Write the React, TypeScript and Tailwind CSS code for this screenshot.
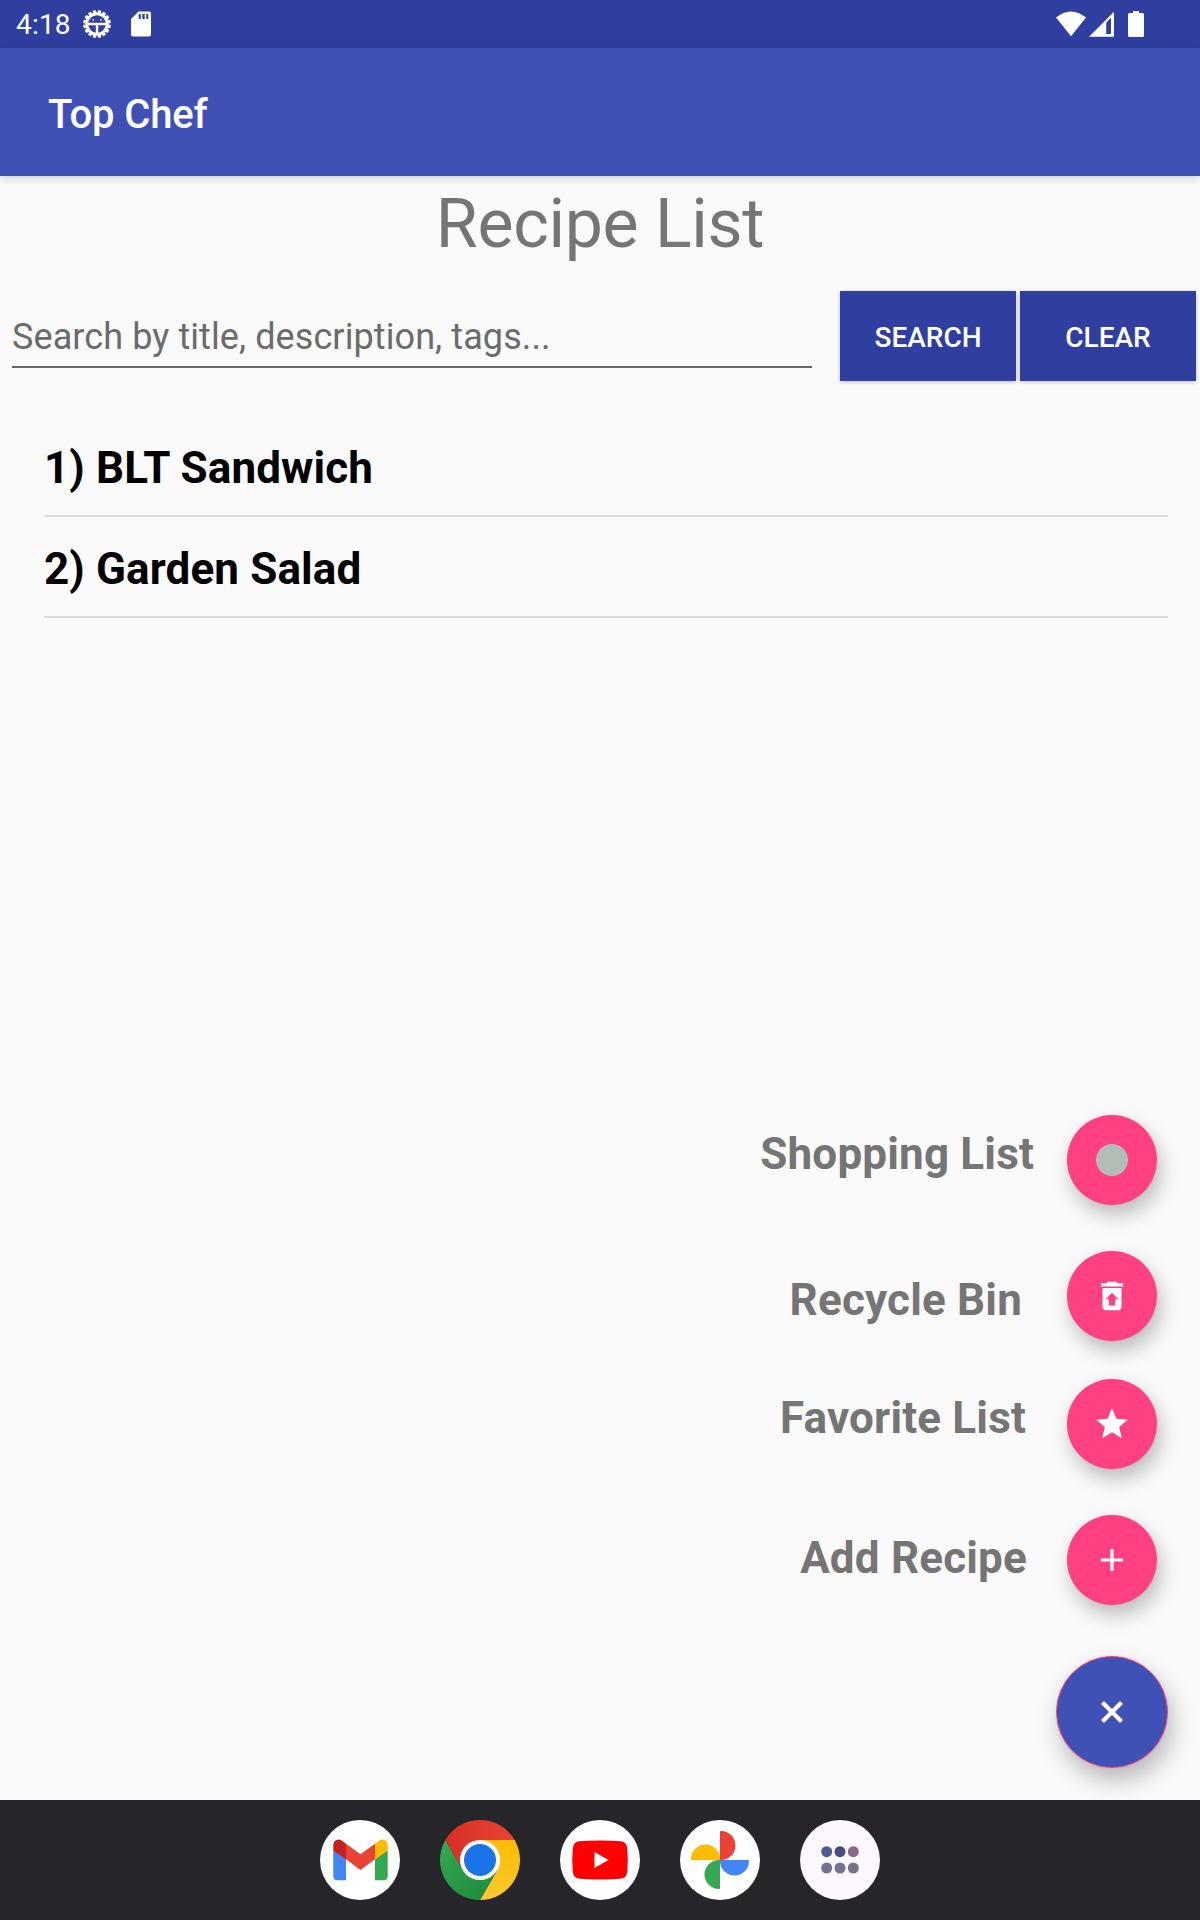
import React from "react";

const recipes = ["1) BLT Sandwich", "2) Garden Salad"];

function GearIcon() {
  const teeth = Array.from({ length: 16 }, (_, i) => i * 22.5 + 11.25);
  return (
    <svg width="28" height="28" viewBox="0 0 28 28" fill="none">
      <g fill="#fff">
        {teeth.map((a) => (
          <rect key={a} x="12.3" y="0.1" width="3.4" height="4" rx="0.9" transform={`rotate(${a} 14 14)`} />
        ))}
        <circle cx="10.2" cy="9.8" r="0.9" />
        <circle cx="17.8" cy="9.8" r="0.9" />
      </g>
      <circle cx="14" cy="14" r="10.2" stroke="#fff" strokeWidth="2.8" />
      <path d="M4 14H24M14 14V25" stroke="#fff" strokeWidth="2.4" />
    </svg>
  );
}

function StatusBar() {
  return (
    <div className="flex h-12 items-center bg-[#303f9f] text-white">
      <span className="ml-4 w-[55px] pt-0.5 text-[28px] leading-[48px] tracking-[0.2px] whitespace-nowrap">4:18</span>
      <span className="ml-3">
        <GearIcon />
      </span>
      <svg className="ml-5" width="20" height="26" viewBox="0 0 20 26">
        <path fill="#fff" fillRule="evenodd" d="M7.500 .5H18Q20 .5 20 2.500V23.500Q20 25.500 18 25.500H2Q0 25.500 0 23.500V8ZM7.700 3V8H9.700V3ZM11.300 3V8H13.700V3ZM15.300 3V8H17.300V3Z" />
      </svg>
      <div className="mr-14 ml-auto flex items-center">
        <svg width="30" height="26" viewBox="0 0 30 26">
          <path fill="#fff" d="M0 6.500Q15-5.500 30 6.500L15 25.200Z" />
        </svg>
        <svg className="ml-[3px]" width="25" height="26" viewBox="0 0 25 26">
          <path fill="#fff" fillRule="evenodd" d="M25 .8V25.800H0ZM22 6.800L17.200 11.800V23H22Z" />
        </svg>
        <svg className="ml-[14px]" width="16" height="26" viewBox="0 0 16 26">
          <path fill="#fff" d="M5 0H11V2H14.500Q16 2 16 3.500V24.500Q16 26 14.500 26H1.500Q0 26 0 24.500V3.500Q0 2 1.500 2H5Z" />
        </svg>
      </div>
    </div>
  );
}

function ActionButton({ label }: { label: string }) {
  return (
    <button className="h-[90px] w-44 bg-[#303f9f] pt-[3px] text-[28px] font-medium text-white shadow-[0_1px_4px_rgba(0,0,0,0.25)]">
      {label}
    </button>
  );
}

type FabRowProps = { label: string; className: string; labelClass: string; children: React.ReactNode };

function FabRow({ label, className, labelClass, children }: FabRowProps) {
  return (
    <div className={`flex h-[90px] items-start justify-end pr-[43px] ${className}`}>
      <span className={`text-[44px] leading-[52px] font-bold tracking-[0.18px] whitespace-nowrap text-[#757575] ${labelClass}`}>{label}</span>
      <button className="flex size-[90px] items-center justify-center rounded-full bg-[#ff4081] shadow-[4px_10px_20px_rgba(0,0,0,0.25),0_0_3px_rgba(0,0,0,0.08)]">
        {children}
      </button>
    </div>
  );
}

function Icon({ d }: { d: string }) {
  return (
    <svg width="38" height="38" viewBox="0 0 24 24" fill="#fff">
      <path d={d} />
    </svg>
  );
}

function Gmail() {
  return (
    <svg width="80" height="80" viewBox="0 0 80 80">
      <circle cx="40" cy="40" r="40" fill="#fff" />
      <path fill="#4285f4" d="M13.300 30L26 39V60.300H17.300Q13.300 60.300 13.300 56.300Z" />
      <path fill="#34a853" d="M55 39L67.700 30V56.300Q67.700 60.300 63.700 60.300H55Z" />
      <path fill="#ea4335" d="M26 23.800L40.500 34.300L55 23.800V39.300L40.500 50L26 39.300Z" />
      <path fill="#c5221f" d="M13.300 30.500V25.500Q13.300 19.500 19 19.500Q21 19.500 23 21.500L26 23.800V39.500Z" />
      <path fill="#fbbc04" d="M67.700 30.500V25.500Q67.700 19.500 62 19.500Q60 19.500 58 21.500L55 23.800V39.500Z" />
    </svg>
  );
}

function Chrome() {
  return (
    <svg width="80" height="80" viewBox="0 0 80 80">
      <defs>
        <linearGradient id="red" x1="0" x2="1">
          <stop stopColor="#d93025" />
          <stop offset="1" stopColor="#ea4335" />
        </linearGradient>
        <linearGradient id="green" x1="0.7" y1="1" x2="0.2" y2="0">
          <stop stopColor="#1e8e3e" />
          <stop offset="1" stopColor="#34a853" />
        </linearGradient>
        <linearGradient id="yellow" x1="0.3" y1="1" x2="0.6" y2="0">
          <stop stopColor="#fcc934" />
          <stop offset="1" stopColor="#fbbc04" />
        </linearGradient>
      </defs>
      <path fill="url(#yellow)" d="M40 20H74.640A40 40 0 0 1 40 80L57.320 50Z" />
      <path fill="url(#green)" d="M40 80A40 40 0 0 1 5.360 20L22.680 50L40 60L57.320 50Z" />
      <path fill="url(#red)" d="M5.360 20A40 40 0 0 1 74.640 20H40L22.680 50Z" />
      <circle cx="40" cy="40" r="20" fill="#fff" />
      <circle cx="40" cy="40" r="16" fill="#1a73e8" />
    </svg>
  );
}

function YouTube() {
  return (
    <svg width="80" height="80" viewBox="0 0 80 80">
      <circle cx="40" cy="40" r="40" fill="#fff" />
      <path fill="#f00" d="M19.500 21.300Q40 19.800 60.500 21.300Q66.500 21.800 67.200 28Q68.400 40 67.200 52Q66.500 58.200 60.500 58.700Q40 60.200 19.500 58.700Q13.500 58.200 12.800 52Q11.600 40 12.800 28Q13.500 21.800 19.500 21.300Z" />
      <path fill="#fff" d="M34.500 32L48.500 40L34.500 48Z" />
    </svg>
  );
}

function Photos() {
  return (
    <svg width="80" height="80" viewBox="0 0 80 80">
      <circle cx="40" cy="40" r="40" fill="#fff" />
      <path fill="#ea4335" d="M40 11.800Q40 11 41 11A14.500 14.500 0 0 1 41 40H40Z" />
      <path fill="#4285f4" d="M68.200 40Q69 40 69 41A14.500 14.500 0 0 1 40 41V40Z" />
      <path fill="#34a853" d="M40 68.200Q40 69 39 69A14.500 14.500 0 0 1 39 40H40Z" />
      <path fill="#fbbc04" d="M11.800 40Q11 40 11 39A14.500 14.500 0 0 1 40 39V40Z" />
    </svg>
  );
}

function AllApps() {
  return (
    <svg width="80" height="80" viewBox="0 0 80 80">
      <circle cx="40" cy="40" r="40" fill="#fdf8fe" />
      <circle cx="26.700" cy="31.700" r="5.500" fill="#505b92" />
      <circle cx="40" cy="31.700" r="5.500" fill="#434e85" />
      <circle cx="53.300" cy="31.700" r="5.500" fill="#8c6784" />
      <g fill="#727589">
        <circle cx="26.700" cy="48" r="5.500" />
        <circle cx="40" cy="48" r="5.500" />
        <circle cx="53.300" cy="48" r="5.500" />
      </g>
    </svg>
  );
}

export default function App() {
  return (
    <div className="flex h-[1920px] w-[1200px] flex-col overflow-hidden bg-[#fafafa] font-[Roboto,sans-serif]">
      <StatusBar />
      <header className="flex h-32 items-center bg-[#3f51b5] pt-1.5 pl-12 shadow-[0_2px_9px_rgba(0,0,0,0.18)]">
        <h1 className="text-[40px] leading-[48px] font-medium tracking-[-0.15px] text-white">Top Chef</h1>
      </header>
      <h2 className="mt-2 h-20 text-center text-[68px] leading-20 tracking-[-0.3px] text-[#757575]">Recipe List</h2>
      <div className="mt-[27px] flex h-[90px] items-start justify-between pr-1 pl-3">
        <div className="h-[77px] w-[800px] border-b-2 border-[#666] pt-[25px] text-[36px] leading-[42px] tracking-[0.09px] text-[#6b6b6b]">
          Search by title, description, tags...
        </div>
        <div className="flex gap-1">
          <ActionButton label="SEARCH" />
          <ActionButton label="CLEAR" />
        </div>
      </div>
      <ul className="mt-[35px] mr-8 ml-11">
        {recipes.map((r) => (
          <li key={r} className="h-[101px] border-b-2 border-[#dcdcdc] pt-[26px] text-[44px] leading-[52px] font-bold tracking-[0.12px] text-black">
            {r}
          </li>
        ))}
      </ul>
      <div className="mt-auto flex h-[685px] flex-col">
        <FabRow label="Shopping List" className="" labelClass="mt-[13px] mr-[33px]">
          <span className="size-8 rounded-full bg-[#b2bdb6]" />
        </FabRow>
        <FabRow label="Recycle Bin" className="mt-[46px]" labelClass="mt-[23px] mr-[45px]">
          <Icon d="M19 4h-3.500l-1-1h-5l-1 1H5v2h14zM6 7v12c0 1.100.9 2 2 2h8c1.100 0 2-.9 2-2V7H6zm8 7v4h-4v-4H8l4-4 4 4h-2z" />
        </FabRow>
        <FabRow label="Favorite List" className="mt-[38px]" labelClass="mt-[13px] mr-[41px]">
          <Icon d="M12 17.270L18.180 21l-1.640-7.030L22 9.240l-7.190-.610L12 2 9.190 8.630 2 9.240l5.460 4.730L5.820 21z" />
        </FabRow>
        <FabRow label="Add Recipe" className="mt-[46px]" labelClass="mt-[17px] mr-[40px]">
          <Icon d="M19 13h-6v6h-2v-6H5v-2h6V5h2v6h6v2z" />
        </FabRow>
        <div className="mt-[51px] flex justify-end pr-8">
          <button className="flex size-28 items-center justify-center rounded-full border border-[#ff4081] bg-[#3f51b5] shadow-[4px_12px_24px_rgba(0,0,0,0.27),0_0_3px_rgba(0,0,0,0.08)]">
            <svg width="24" height="24" viewBox="0 0 24 24" stroke="#fff" strokeWidth="4.2">
              <path d="M2.500 2.500L21.500 21.500M21.500 2.500L2.500 21.500" />
            </svg>
          </button>
        </div>
      </div>
      <nav className="z-10 flex h-[120px] items-center justify-center gap-10 bg-[#26252a]">
        <Gmail />
        <Chrome />
        <YouTube />
        <Photos />
        <AllApps />
      </nav>
    </div>
  );
}
